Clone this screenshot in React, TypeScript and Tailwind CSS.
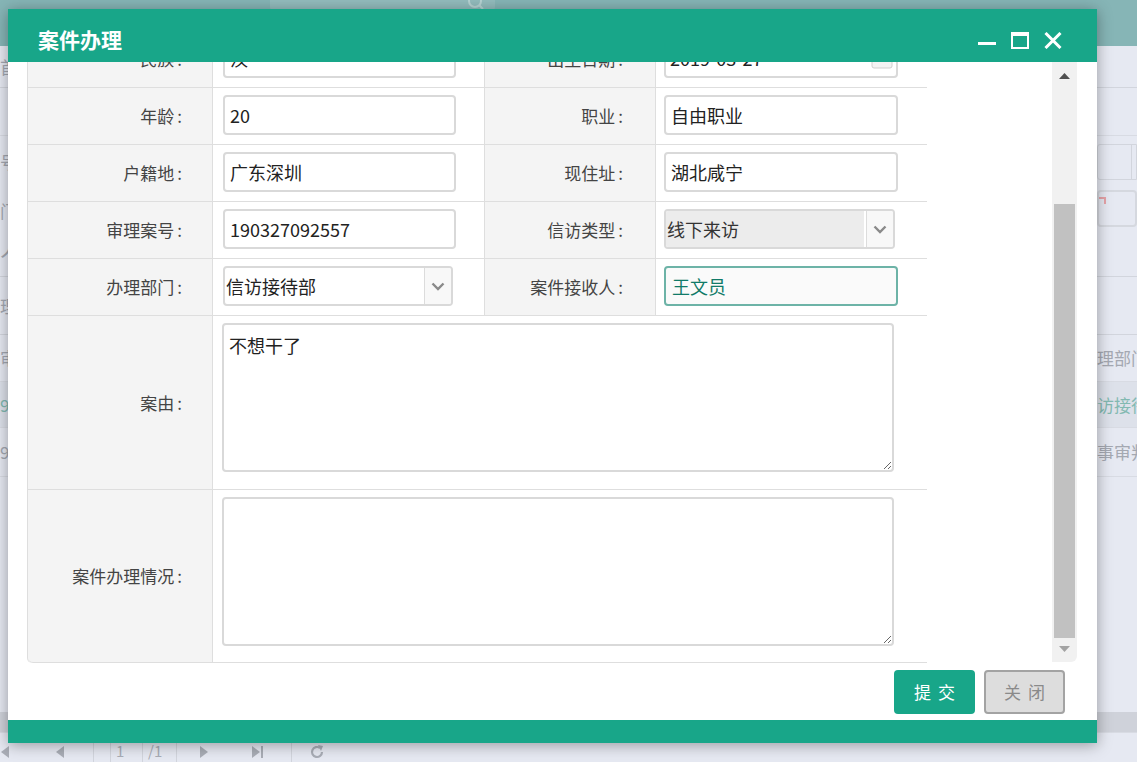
import React from 'react';

const labelBase =
  'flex items-center justify-end bg-[#f4f4f4] border-r border-b border-[#dedede] text-[17px] leading-[24px] text-[#444]';
const valueCell = 'flex items-start pt-[7px] border-r border-b border-[#dedede]';

function Label({ text, right, tall }: { text: string; right: string; tall?: string }) {
  return (
    <div className={`${labelBase} ${right} ${tall ?? 'h-[57px]'}`}>
      {text}
      <span className="ml-[3px]">:</span>
    </div>
  );
}

function Chevron() {
  return (
    <svg width="14" height="9" viewBox="0 0 14 9">
      <path d="M1.5 1.5 7 7l5.5-5.5" fill="none" stroke="#8a8a8a" strokeWidth="2.4" />
    </svg>
  );
}

function TextField({ value, width, active }: { value: string; width: string; active?: boolean }) {
  return (
    <input
      readOnly
      value={value}
      className={
        active
          ? `${width} h-[40px] rounded-[4px] border-2 border-[#6db3a7] bg-[#fafafa] px-[6px] text-[18px] text-[#117a68] outline-none`
          : `${width} h-[40px] rounded-[4px] border-2 border-[#d9d9d9] bg-white px-[5px] text-[18px] text-[#222] outline-none`
      }
    />
  );
}

function SelectField({ value, width, disabled }: { value: string; width: string; disabled?: boolean }) {
  return (
    <div className={`${width} flex h-[40px] overflow-hidden rounded-[4px] border-2 border-[#d9d9d9] bg-white`}>
      <div
        className={
          disabled
            ? 'flex flex-1 items-center bg-[#ececec] pl-[1px] text-[18px] text-[#333]'
            : 'flex flex-1 items-center pl-[1px] text-[18px] text-[#222]'
        }
      >
        {value}
      </div>
      <div className="ml-[2px] flex w-[27px] items-center justify-center border-l border-[#dcdcdc] bg-[#f8f8f8]">
        <Chevron />
      </div>
    </div>
  );
}

function DateField({ value }: { value: string }) {
  return (
    <div className="flex h-[40px] w-[234px] items-center justify-between rounded-[4px] border-2 border-[#d9d9d9] bg-white pl-[4px] pr-[3px]">
      <span className="text-[18px] text-[#222]">{value}</span>
      <svg width="22" height="22" viewBox="0 0 22 22">
        <rect x="1" y="3" width="20" height="18" rx="2" fill="#f3f3f3" stroke="#cfcfcf" />
        <rect x="1" y="3" width="20" height="5" fill="#e2e2e2" />
        <rect x="6" y="11" width="3" height="3" fill="#c9c9c9" />
        <rect x="12" y="11" width="3" height="3" fill="#c9c9c9" />
      </svg>
    </div>
  );
}

function Triangle({ dir, color }: { dir: 'up' | 'down'; color: string }) {
  return (
    <svg width="11" height="6" viewBox="0 0 11 6">
      <polygon points={dir === 'up' ? '0,6 5.5,0 11,6' : '0,0 11,0 5.5,6'} fill={color} />
    </svg>
  );
}

function PagerArrow({ dir, edge }: { dir: 'left' | 'right'; edge?: boolean }) {
  return (
    <svg width="12" height="14" viewBox="0 0 12 14">
      {dir === 'left' ? (
        <>
          {edge && <rect x="0" y="1" width="2" height="12" fill="#a9adb6" />}
          <polygon points="11,1 3,7 11,13" fill="#a9adb6" />
        </>
      ) : (
        <>
          <polygon points="1,1 9,7 1,13" fill="#a9adb6" />
          {edge && <rect x="10" y="1" width="2" height="12" fill="#a9adb6" />}
        </>
      )}
    </svg>
  );
}

// list page that sits behind the dialog
function BackgroundPage() {
  return (
    <div className="flex h-[762px] w-[1137px] flex-col bg-[#e6e9f2] text-[17px] text-[#a4a8b1]">
      <div className="h-[46px] bg-[#86b5b6]">
        <div className="ml-[270px] flex h-[10px] w-[225px] items-end justify-end rounded-b-[3px] bg-[#93bcbd] pr-[10px]">
          <svg width="18" height="10" viewBox="0 0 18 10">
            <circle cx="8" cy="1" r="6" fill="none" stroke="#b7d3d3" strokeWidth="2" />
            <path d="M12 5l4 4" stroke="#b7d3d3" strokeWidth="2" />
          </svg>
        </div>
      </div>
      <div className="flex h-[42px] items-center border-b border-[#d2d5dd]">
        <span>首页</span>
      </div>
      <div className="flex h-[189px] flex-col border-b border-[#d2d5dd]">
        <div className="h-[48px] border-b border-[#d8dbe3]" />
        <div className="flex h-[42px] items-center justify-between pt-[10px]">
          <span>号</span>
          <div className="flex h-[36px] w-[40px] rounded-l-[3px] border border-[#d2d5dd]">
            <div className="w-[33px]" />
            <div className="border-l border-[#d2d5dd]" />
          </div>
        </div>
        <div className="flex h-[52px] items-start justify-between pt-[12px]">
          <span className="mt-[8px]">门</span>
          <div className="relative h-[37px] w-[40px] rounded-[4px] border-2 border-[#d5d8df]">
            <div className="absolute right-[29px] top-[5px] h-[7px] w-[7px] border-r-2 border-t-2 border-[#e6a3a8]" />
          </div>
        </div>
        <div className="flex flex-1 items-start">
          <span className="-mt-[2px] text-[24px]">人</span>
        </div>
      </div>
      <div className="flex h-[58px] items-center border-b border-[#d2d5dd]">
        <span>理</span>
      </div>
      <div className="flex h-[47px] items-center justify-between border-b border-[#d8dbe3]">
        <span>审</span>
        <span className="w-[40px] overflow-hidden whitespace-nowrap">理部门</span>
      </div>
      <div className="flex h-[46px] items-center justify-between border-b border-[#d8dbe3] bg-[#dde1ea] text-[#82b9b1]">
        <span>9</span>
        <span className="w-[40px] overflow-hidden whitespace-nowrap">访接待部</span>
      </div>
      <div className="flex h-[49px] items-center justify-between border-b border-[#d8dbe3]">
        <span>9</span>
        <span className="w-[40px] overflow-hidden whitespace-nowrap">事审判部</span>
      </div>
      <div className="flex-1" />
      <div className="h-[21px] border-b border-[#d8dbe3] bg-[#cfd2da]" />
      <div className="flex h-[29px] items-center pt-[8px] text-[15px] text-[#a9adb6]">
        <div className="-ml-[2px]">
          <PagerArrow dir="left" edge />
        </div>
        <div className="ml-[43px]">
          <PagerArrow dir="left" />
        </div>
        <div className="ml-[28px] h-[24px] border-l border-[#d2d5dd]" />
        <div className="ml-[16px] flex h-[24px] w-[33px] items-center border border-[#d2d5dd] pl-[5px]">1</div>
        <span className="ml-[5px]">/1</span>
        <div className="ml-[14px] h-[24px] border-l border-[#d2d5dd]" />
        <div className="ml-[22px]">
          <PagerArrow dir="right" />
        </div>
        <div className="ml-[40px]">
          <PagerArrow dir="right" edge />
        </div>
        <div className="ml-[28px] h-[24px] border-l border-[#d2d5dd]" />
        <svg className="ml-[17px]" width="16" height="16" viewBox="0 0 16 16">
          <path d="M13 8a5 5 0 1 1-2-4" fill="none" stroke="#a9adb6" strokeWidth="2.2" />
          <polygon points="9,1 14,2 12,7" fill="#a9adb6" />
        </svg>
      </div>
    </div>
  );
}

function CaseForm() {
  const l = 'pr-[30px]';
  const r = 'pr-[32px]';
  return (
    <div className="-mt-[31px] grid w-[900px] grid-cols-[185px_272px_171px_272px] rounded-bl-[5px] border-l border-[#dedede]">
      <Label text="民族" right={l} />
      <div className={`${valueCell} h-[57px] pl-[10px]`}>
        <TextField value="汉" width="w-[233px]" />
      </div>
      <Label text="出生日期" right={r} />
      <div className={`${valueCell} h-[57px] pl-[8px]`}>
        <DateField value="2019-03-27" />
      </div>

      <Label text="年龄" right={l} />
      <div className={`${valueCell} h-[57px] pl-[10px]`}>
        <TextField value="20" width="w-[233px]" />
      </div>
      <Label text="职业" right={r} />
      <div className={`${valueCell} h-[57px] pl-[8px]`}>
        <TextField value="自由职业" width="w-[234px]" />
      </div>

      <Label text="户籍地" right={l} />
      <div className={`${valueCell} h-[57px] pl-[10px]`}>
        <TextField value="广东深圳" width="w-[233px]" />
      </div>
      <Label text="现住址" right={r} />
      <div className={`${valueCell} h-[57px] pl-[8px]`}>
        <TextField value="湖北咸宁" width="w-[234px]" />
      </div>

      <Label text="审理案号" right={l} />
      <div className={`${valueCell} h-[57px] pl-[10px]`}>
        <TextField value="190327092557" width="w-[233px]" />
      </div>
      <Label text="信访类型" right={r} />
      <div className={`${valueCell} h-[57px] pl-[8px]`}>
        <SelectField value="线下来访" width="w-[231px]" disabled />
      </div>

      <Label text="办理部门" right={l} />
      <div className={`${valueCell} h-[57px] pl-[10px]`}>
        <SelectField value="信访接待部" width="w-[230px]" />
      </div>
      <Label text="案件接收人" right={r} />
      <div className={`${valueCell} h-[57px] pl-[8px]`}>
        <TextField value="王文员" width="w-[234px]" active />
      </div>

      <Label text="案由" right={l} tall="h-[174px]" />
      <div className="col-span-3 h-[174px] border-b border-r border-[#dedede] pl-[9px] pt-[7px]">
        <textarea
          readOnly
          value="不想干了"
          className="block h-[149px] w-[672px] rounded-[4px] border-2 border-[#d9d9d9] px-[5px] pt-[7px] text-[18px] leading-[26px] text-[#222] outline-none"
        />
      </div>

      <Label text="案件办理情况" right={l} tall="h-[173px] rounded-bl-[5px]" />
      <div className="col-span-3 h-[173px] border-b border-r border-[#dedede] pl-[9px] pt-[7px]">
        <textarea
          readOnly
          value=""
          className="block h-[149px] w-[672px] rounded-[4px] border-2 border-[#d9d9d9] px-[5px] pt-[7px] text-[18px] leading-[26px] text-[#222] outline-none"
        />
      </div>
    </div>
  );
}

function CaseDialog() {
  return (
    <div className="absolute left-[8px] top-[9px] flex h-[734px] w-[1089px] flex-col bg-white shadow-[0_2px_14px_rgba(0,0,0,0.35)]">
      <div className="flex h-[53px] items-center justify-between bg-[#18a689] pl-[30px] pr-[35px] pt-[7px]">
        <span className="text-[21px] font-bold leading-[24px] text-white">案件办理</span>
        <div className="flex items-center gap-[15px] pt-[2px]">
          <svg width="18" height="17" viewBox="0 0 18 17">
            <rect x="0" y="10" width="18" height="3" fill="#fff" />
          </svg>
          <svg width="18" height="17" viewBox="0 0 18 17">
            <rect x="1" y="2" width="16" height="14" fill="none" stroke="#fff" strokeWidth="2" />
            <rect x="0" y="0" width="18" height="4" fill="#fff" />
          </svg>
          <svg width="18" height="17" viewBox="0 0 18 17">
            <path d="M1.5 1 16.5 16M16.5 1 1.5 16" stroke="#fff" strokeWidth="3" />
          </svg>
        </div>
      </div>

      <div className="flex h-[601px]">
        <div className="h-[601px] overflow-hidden pl-[19px]">
          <CaseForm />
        </div>
        <div className="flex-1" />
        <div className="mr-[20px] flex h-[600px] w-[25px] flex-col rounded-br-[6px] bg-[#f1f1f1]">
          <div className="flex h-[25px] items-center justify-center pt-[3px]">
            <Triangle dir="up" color="#505050" />
          </div>
          <div className="flex flex-1 flex-col justify-end px-[2px]">
            <div className="h-[434px] bg-[#c1c1c1]" />
          </div>
          <div className="flex h-[24px] items-center justify-center pb-[2px]">
            <Triangle dir="down" color="#a3a3a3" />
          </div>
        </div>
      </div>

      <div className="flex h-[57px] items-center justify-end gap-[9px] pr-[32px]">
        <button className="h-[44px] w-[81px] rounded-[4px] bg-[#18a689] pl-[7px] text-[17px] tracking-[7px] text-white">
          提交
        </button>
        <button className="h-[44px] w-[81px] rounded-[4px] border-2 border-[#a3a3a3] bg-[#dddddd] pl-[7px] text-[17px] tracking-[7px] text-[#8a8a8a]">
          关闭
        </button>
      </div>

      <div className="h-[23px] bg-[#18a689]" />
    </div>
  );
}

export default function App() {
  return (
    <div className="relative h-[762px] w-[1137px] overflow-hidden font-['Noto_Sans_CJK_SC','Noto_Sans',sans-serif]">
      <BackgroundPage />
      <CaseDialog />
    </div>
  );
}
